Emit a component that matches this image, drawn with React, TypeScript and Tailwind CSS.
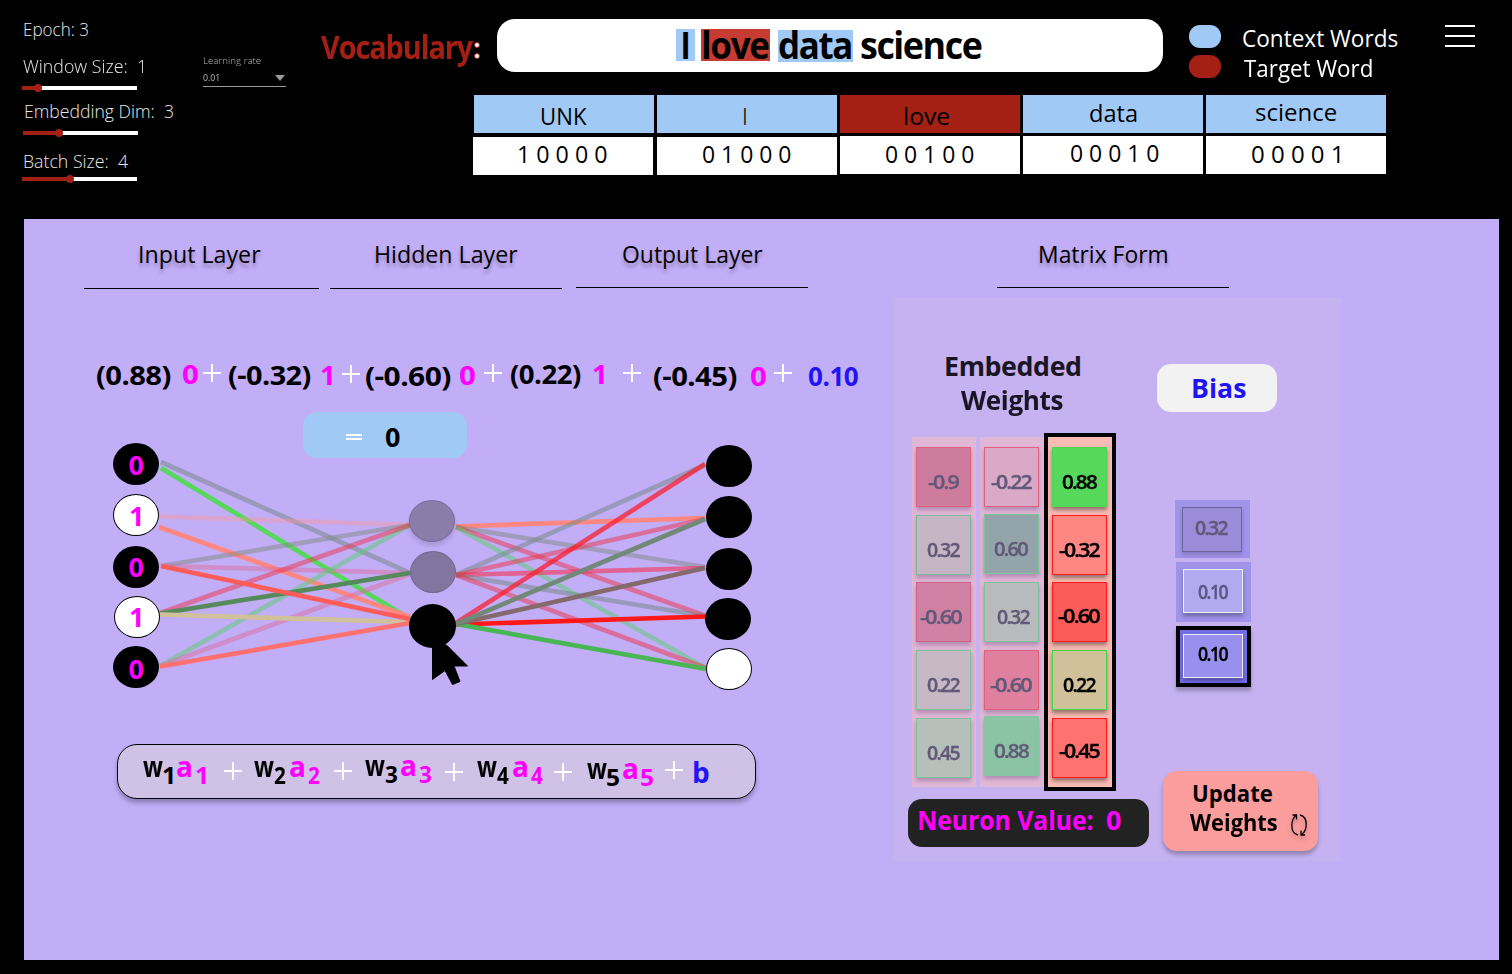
import React, { useLayoutEffect, useRef } from "react";

/* A text slot: the label is condensed or widened so that its ink fills the slot's width. */
function T({ children, className = "" }: { children: string; className?: string }) {
  const outer = useRef<HTMLSpanElement>(null);
  const inner = useRef<HTMLSpanElement>(null);
  useLayoutEffect(() => {
    const fit = () => {
      const o = outer.current;
      const i = inner.current;
      const ctx = document.createElement("canvas").getContext("2d");
      if (!o || !i || !ctx) return;
      const cs = getComputedStyle(i);
      ctx.font = `${cs.fontWeight} ${cs.fontSize} ${cs.fontFamily}`;
      const m = ctx.measureText(children);
      const tracking = (parseFloat(cs.letterSpacing) || 0) * (children.length - 1);
      const ink = m.actualBoundingBoxRight + m.actualBoundingBoxLeft + tracking;
      if (ink <= 0) return;
      const s = o.offsetWidth / ink;
      i.style.transform = `translateX(${m.actualBoundingBoxLeft * s}px) scaleX(${s})`;
    };
    fit();
    document.fonts.ready.then(fit);
  }, [children]);
  return (
    <span ref={outer} className={`block shrink-0 whitespace-pre ${className}`}>
      <span ref={inner} className="inline-block origin-left align-top">
        {children}
      </span>
    </span>
  );
}

function Plus({ className = "" }: { className?: string }) {
  return (
    <svg className={`block h-[18px] w-[18px] shrink-0 ${className}`} viewBox="0 0 18 18" stroke="#fff" strokeWidth="2">
      <path d="M0 9H18M9 0V18" />
    </svg>
  );
}

function Slider({ fill, className = "" }: { fill: string; className?: string }) {
  return (
    <div className={`flex h-2 w-[115px] shrink-0 items-center ${className}`}>
      <div className={`h-1 bg-[#a41f14] ${fill}`} />
      <div className="z-10 -mx-1 h-2 w-2 shrink-0 rounded-full bg-[#a41f14]" />
      <div className="h-1 flex-1 bg-white" />
    </div>
  );
}

function Settings() {
  const t = "h-8 text-[17.5px] leading-[33px] font-light text-[#e8e8e8]";
  return (
    <>
      <div className="flex w-[203px] shrink-0 flex-col pt-[13px] pl-[22px]">
        <T className={`ml-[1.5px] w-[64px] ${t}`}>Epoch: 3</T>
        <T className={`mt-[5px] ml-px w-[120px] ${t}`}>Window Size:  1</T>
        <Slider className="mt-[2px]" fill="w-[16px]" />
        <T className={`mt-[3px] ml-[3px] w-[148px] ${t}`}>Embedding Dim:  3</T>
        <Slider className="mt-[2px] ml-px" fill="w-[36px]" />
        <T className={`mt-[8px] ml-[2px] w-[104px] ${t}`}>Batch Size:  4</T>
        <Slider className="-mt-[2px]" fill="w-[48px]" />
      </div>
      <div className="flex w-[83px] shrink-0 flex-col pt-[53px] text-[9.5px] leading-4 text-[#b8b8b8]">
        <T className="h-4 w-[58px] font-light">Learning rate</T>
        <div className="mt-px flex h-[17px] items-start justify-between border-b border-[#999]">
          <T className="h-4 w-[16px]">0.01</T>
          <svg className="mt-[5px] mr-px h-[6px] w-[10px]" viewBox="0 0 10 6" fill="#999">
            <path d="M0 0H10L5 6Z" />
          </svg>
        </div>
      </div>
    </>
  );
}

const vocab = [
  { word: "UNK", bits: "1 0 0 0 0", bg: "bg-[#a0c9f6]", w: "w-[45px] ml-[68px] mt-[5px]", b: "w-[88px] ml-[46px] mt-px", row: "mt-1 -ml-px", gap: "" },
  { word: "I", bits: "0 1 0 0 0", bg: "bg-[#a0c9f6]", w: "w-[2px] ml-[87px] mt-[5px]", b: "w-[88px] ml-[46px] mt-px", row: "mt-1", gap: "ml-[3px]" },
  { word: "love", bits: "0 0 1 0 0", bg: "bg-[#a41f14]", w: "w-[44px] ml-[65px] mt-[5px]", b: "w-[88px] ml-[46px] mt-[2px]", row: "mt-[3px]", gap: "ml-[3px]" },
  { word: "data", bits: "0 0 0 1 0", bg: "bg-[#a0c9f6]", w: "w-[47px] ml-[67px] mt-[2px]", b: "w-[88px] ml-[48px] mt-px", row: "mt-[3px]", gap: "ml-[3px]" },
  { word: "science", bits: "0 0 0 0 1", bg: "bg-[#a0c9f6]", w: "w-[80px] ml-[50px] mt-[1px]", b: "w-[88px] ml-[46px] mt-[2px]", row: "mt-[3px]", gap: "ml-[3px]" },
];

function Header() {
  const sent = "text-[37px] leading-8 h-8 font-bold tracking-[-1.5px] text-black";
  return (
    <header className="flex h-[219px] shrink-0">
      <Settings />
      <div className="flex flex-1 flex-col">
        <div className="flex h-[95px] shrink-0 items-start">
          <div className="mt-[27px] ml-[35px] flex w-[176px] shrink-0 text-[32px] leading-10 font-bold tracking-[-1.2px] text-[#a41f14]">
            <T className="h-10 w-[153px]">Vocabulary</T>
            <div className="mt-[15px] flex flex-col gap-[5px]">
              <div className="h-[6px] w-[6px] rounded-full border border-[#a41f14] bg-white" />
              <div className="h-[6px] w-[6px] rounded-full border border-[#a41f14] bg-white" />
            </div>
          </div>
          <div className="mt-[19px] flex h-[53px] w-[666px] shrink-0 items-start rounded-[18px] bg-white pt-[10px] pl-[179px]">
            <div className="h-8 w-[19px] bg-[#a0c9f6] pl-[7px]">
              <T className={`w-[5px] ${sent}`}>I</T>
            </div>
            <div className="ml-[6px] h-8 w-[69px] bg-[#c63c32] pl-[2px]">
              <T className={`w-[66px] ${sent}`}>love</T>
            </div>
            <div className="mt-px ml-2 h-8 w-[75px] bg-[#a0c9f6] pl-px">
              <T className={`-mt-px w-[72px] ${sent}`}>data</T>
            </div>
            <T className={`ml-2 w-[121px] ${sent}`}>science</T>
          </div>
          <div className="mt-[25px] ml-[26px] flex w-[32px] shrink-0 flex-col gap-[7px]">
            <div className="h-[23px] rounded-[11px] bg-[#a0c9f6]" />
            <div className="h-[23px] rounded-[11px] bg-[#a41f14]" />
          </div>
          <div className="mt-[23px] ml-[21px] flex w-[203px] shrink-0 flex-col text-[23.5px] leading-[30px] text-white">
            <T className="ml-px h-[30px] w-[155px]">Context Words</T>
            <T className="ml-[2px] h-[30px] w-[128px]">Target Word</T>
          </div>
          <div className="mt-[25px] flex w-[30px] flex-col gap-2">
            <div className="h-[2px] bg-white" />
            <div className="h-[2px] bg-white" />
            <div className="h-[2px] bg-white" />
          </div>
        </div>
        <div className="ml-[188px] flex text-[23.5px] leading-8 text-black">
          {vocab.map((v) => (
            <div key={v.word} className={`flex w-[180px] flex-col ${v.gap}`}>
              <div className={`flex h-[38px] w-[180px] items-start ${v.bg}`}>
                <T className={`h-8 ${v.w}`}>{v.word}</T>
              </div>
              <div className={`flex h-[38px] w-[180px] items-start bg-white ${v.row}`}>
                <T className={`h-8 ${v.b}`}>{v.bits}</T>
              </div>
            </div>
          ))}
        </div>
      </div>
    </header>
  );
}

const grey = "rgba(112,136,128,.5)";
const haze = "rgba(130,140,130,.5)";
const rose = "rgba(240,50,70,.5)";
const mint = "rgba(85,210,110,.5)";
const pink = "rgba(220,110,155,.5)";
const edges: [number, number, number, number, string][] = [
  [161, 462, 410, 573, grey],
  [161, 468, 410, 619, "#55d85c"],
  [159, 516.5, 410, 525, "rgba(255,150,150,.4)"],
  [159, 527, 410, 617, "#ff8781"],
  [161, 566, 410, 525, haze],
  [161, 566, 410, 573, pink],
  [160, 666, 410, 525, mint],
  [160, 613, 410, 525, rose],
  [160, 666, 410, 574, pink],
  [160, 613.5, 410, 573, "#568a5c"],
  [160, 614.5, 410, 622, "#d1c19b"],
  [161, 566, 410, 619, "#fd5c58"],
  [160, 666.5, 410, 623, "#ff716e"],
  [456, 526.5, 705, 518, "#ff8781"],
  [456, 527, 705, 567, haze],
  [456, 527, 706, 616, rose],
  [456, 527, 706, 668, mint],
  [456, 575, 705, 465, grey],
  [456, 575, 705, 519, rose],
  [456, 575, 705, 568, "rgba(255,25,50,.5)"],
  [456, 575, 705, 616, grey],
  [456, 575, 706, 668, rose],
  [456, 624.5, 706, 616.5, "#ff1818"],
  [456, 623, 705, 464, "rgba(255,25,40,.72)"],
  [456, 624, 706, 669, "#48b753"],
  [456, 624, 705, 568, "#856a6d"],
  [456, 624, 705, 519, "#728878"],
];

const nodes = [
  { x: 136, y: 464, c: "bg-black", t: "0", p: "pt-[6px]" },
  { x: 136, y: 515, c: "bg-white border border-black", t: "1", p: "pt-[5px] pr-px" },
  { x: 136, y: 567, c: "bg-black", t: "0", p: "pt-[5px]" },
  { x: 137, y: 617, c: "bg-white border border-black", t: "1", p: "pt-[4px] pr-[3px]" },
  { x: 136, y: 667, c: "bg-black", t: "0", p: "pt-[7px]" },
  { x: 432, y: 521, c: "bg-[#8b7caa] border border-[#79699a] shadow-[0_4px_4px_rgba(0,0,0,0.12)]" },
  { x: 433, y: 572, c: "bg-[#8374a0] border border-[#746592]" },
  { x: 729, y: 466, c: "bg-black" },
  { x: 729, y: 517, c: "bg-black" },
  { x: 729, y: 569, c: "bg-black" },
  { x: 728, y: 619, c: "bg-black" },
  { x: 729, y: 669, c: "bg-white border border-black" },
];

function Network() {
  return (
    <div className="relative flex h-[354px] w-[870px] shrink-0 items-start pt-[22px] pl-[279px]">
      <svg className="absolute inset-0" width="870" height="354" viewBox="24 390 870 354" strokeWidth="4.7">
        {edges.map((e, i) => (
          <line key={i} x1={e[0]} y1={e[1]} x2={e[2]} y2={e[3]} stroke={e[4]} />
        ))}
        <ellipse cx="432.5" cy="626" rx="23.5" ry="22" />
        <path
          d="M432.5 640V679.5L445 670.5L452.5 684.5L460 681.5L454 666H467.5L447 645.5Z"
          stroke="#000"
          strokeWidth="1"
          strokeLinejoin="round"
        />
      </svg>
      {nodes.map((n, i) => (
        <div
          key={i}
          className={`absolute flex h-[42px] w-[46px] items-start justify-center rounded-[50%] text-[27px] leading-8 font-bold text-[#ff00ff] ${n.c} ${n.p ?? ""}`}
          style={{ left: n.x - 47, top: n.y - 411 }}
        >
          {n.t && <T className={n.t === "0" ? "h-8 w-[15px]" : "h-8 w-[11px]"}>{n.t}</T>}
        </div>
      ))}
      <div className="flex h-[46px] w-[164px] items-start rounded-[14px] bg-[#a0c9f6] pl-[43px]">
        <div className="mt-[22px] flex w-[16px] flex-col gap-[2px]">
          <div className="h-[2px] bg-white" />
          <div className="h-[2px] bg-white" />
        </div>
        <T className="mt-[9px] ml-[23px] h-8 w-[15px] text-[27px] leading-8 font-bold text-black">0</T>
      </div>
    </div>
  );
}

const terms = [
  { n: "1", m: "ml-[25px] mt-[6px]", plus: "ml-[18px] mt-[17px]", d: "w-[10px]", g: "ml-[5px]" },
  { n: "2", m: "ml-[12px] mt-[6px]", plus: "ml-[14px] mt-[17px]", d: "w-[12px]", g: "ml-[4px]" },
  { n: "3", m: "ml-[13px] mt-[5px]", plus: "ml-[14px] mt-[18px]", d: "w-[12px]", g: "ml-[4px]" },
  { n: "4", m: "ml-[14px] mt-[6px]", plus: "ml-[11px] mt-[18px]", d: "w-[12px]", g: "ml-[4px]" },
  { n: "5", m: "ml-[15px] mt-[8px]", plus: "ml-[12px] mt-[16px]", d: "w-[12px]", g: "ml-[4px]" },
];

function Formula() {
  return (
    <div className="ml-[93px] flex h-[55px] w-[639px] shrink-0 items-start rounded-[20px] border border-black bg-[#cfc2e6] text-[28px] leading-8 font-bold text-black shadow-[0_4px_4px_rgba(0,0,0,0.25)]">
      {terms.map((t) => (
        <React.Fragment key={t.n}>
          <div className={`flex shrink-0 items-start ${t.m}`}>
            <T className="-mt-px h-8 w-[20px]">w</T>
            <T className={`mt-[9px] h-8 text-[22.5px] ${t.d}`}>{t.n}</T>
            <T className="-mt-px ml-[4px] h-8 w-[14px] text-[#ff00ff]">a</T>
            <T className={`mt-[9px] h-8 text-[22.5px] text-[#ff00ff] ${t.g} ${t.d}`}>{t.n}</T>
          </div>
          <Plus className={t.plus} />
        </React.Fragment>
      ))}
      <T className="mt-[11px] ml-[11px] h-8 w-[15px] text-[#1f14f5]">b</T>
    </div>
  );
}

function Equation() {
  const m = "text-[#ff00ff]";
  return (
    <div className="mt-[69px] flex h-8 shrink-0 items-start pl-[73px] text-[27.5px] leading-8 font-bold tracking-[-0.5px] text-black [&>span]:h-8">
      <T className="mt-px w-[74px]">(0.88)</T>
      <T className={`ml-[12px] w-[15px] ${m}`}>0</T>
      <Plus className="mt-[6px] ml-[5px]" />
      <T className="mt-px ml-[8px] w-[82px]">(-0.32)</T>
      <T className={`mt-px ml-[10px] w-[11px] ${m}`}>1</T>
      <Plus className="mt-[7px] ml-[10px]" />
      <T className="mt-[2px] ml-[6px] w-[85px]">(-0.60)</T>
      <T className={`mt-px ml-[9px] w-[15px] ${m}`}>0</T>
      <Plus className="mt-[6px] ml-[9px]" />
      <T className="ml-[9px] w-[70px]">(0.22)</T>
      <T className={`ml-[12px] w-[11px] ${m}`}>1</T>
      <Plus className="mt-[6px] ml-[19px]" />
      <T className="mt-[2px] ml-[13px] w-[83px]">(-0.45)</T>
      <T className={`mt-[2px] ml-[14px] w-[15px] ${m}`}>0</T>
      <Plus className="mt-[6px] ml-[8px]" />
      <T className="mt-[2px] ml-[17px] w-[49px] text-[#1f14f5]">0.10</T>
    </div>
  );
}

function Heading({ box, slot, children }: { box: string; slot: string; children: string }) {
  return (
    <div className={`flex shrink-0 items-start border-b border-black pt-[19px] ${box}`}>
      <T className={`h-8 text-[23.5px] leading-8 text-black [text-shadow:0_4px_4px_rgba(0,0,0,0.25)] ${slot}`}>{children}</T>
    </div>
  );
}

const dim = "text-[#625978] shadow-[0_3px_4px_rgba(70,40,100,0.3)]";
const lit = "text-black shadow-[0_3px_4px_rgba(0,0,0,0.4)]";
const columns = [
  {
    box: "mt-1 h-[350px] w-[64px] bg-[#e1b7d6]",
    tone: dim,
    cells: [
      { t: "-0.9", c: "bg-[#ce7c9d] border-[#e2607f]", s: "ml-[11px] mt-[21px] w-[31px]" },
      { t: "0.32", c: "mt-[8px] bg-[#c6b5c5] border-[#7dba98]", s: "ml-[10px] mt-[21px] w-[33px]" },
      { t: "-0.60", c: "mt-[7px] bg-[#d081a3] border-[#cf6288]", s: "ml-[3px] mt-[21px] w-[42px]" },
      { t: "0.22", c: "mt-[8px] bg-[#c6b8c4] border-[#7dc49b]", s: "ml-[10px] mt-[21px] w-[33px]" },
      { t: "0.45", c: "mt-[8px] bg-[#b6bfba] border-[#7dc49b]", s: "ml-[10px] mt-[21px] w-[33px]" },
    ],
  },
  {
    box: "mt-1 ml-1 h-[350px] w-[64px] bg-[#e1b7d6]",
    tone: dim,
    cells: [
      { t: "-0.22", c: "bg-[#dba9c8] border-[#e2607f]", s: "ml-[6px] mt-[21px] w-[41px]" },
      { t: "0.60", c: "mt-[7px] bg-[#93a5ab] border-[#7dc49b]", s: "ml-[9px] mt-[21px] w-[34px]" },
      { t: "0.32", c: "mt-[8px] bg-[#b9babd] border-[#7dc49b]", s: "ml-[12px] mt-[21px] w-[33px]" },
      { t: "-0.60", c: "mt-[8px] bg-[#df809f] border-[#e2607f]", s: "ml-[5px] mt-[21px] w-[42px]" },
      { t: "0.88", c: "mt-[6px] bg-[#8bc3a5] border-[#86c6a4]", s: "ml-[9px] mt-[21px] w-[35px]" },
    ],
  },
  {
    box: "h-[358px] w-[72px] border-4 border-black bg-[#f9bbb3]",
    tone: lit,
    cells: [
      { t: "0.88", c: "bg-[#55d85c] border-[#4ad852]", s: "ml-[9px] mt-[21px] w-[35px]" },
      { t: "-0.32", c: "mt-[8px] bg-[#fe8683] border-[#ff1b1b]", s: "ml-[6px] mt-[21px] w-[41px]" },
      { t: "-0.60", c: "mt-[7px] bg-[#fc5c59] border-[#ff1b1b]", s: "ml-[5px] mt-[20px] w-[42px]" },
      { t: "0.22", c: "mt-[8px] bg-[#d1c19b] border-[#3ddc46]", s: "ml-[10px] mt-[21px] w-[33px]" },
      { t: "-0.45", c: "mt-[8px] bg-[#fe7270] border-[#ff1b1b]", s: "ml-[6px] mt-[19px] w-[41px]" },
    ],
  },
];

function Matrix() {
  const val = "h-6 text-[20.5px] leading-6 font-semibold tracking-[-1.8px] [-webkit-text-stroke:0.35px_currentColor]";
  const title = "h-8 text-[27px] leading-8 font-bold tracking-[-0.4px] text-[#1a1524]";
  return (
    <div className="mt-[9px] flex h-[564px] w-[448px] shrink-0 items-start bg-[#c6b2f1]">
      <div className="flex w-[255px] shrink-0 flex-col pt-[53px]">
        <T className={`ml-[52px] w-[134px] ${title}`}>Embedded</T>
        <T className={`mt-[2px] ml-[67px] w-[102px] ${title}`}>Weights</T>
        <div className="mt-[17px] flex items-start pl-[18px]">
          {columns.map((col, i) => (
            <div key={i} className={`flex shrink-0 flex-col px-1 pt-[10px] ${col.box}`}>
              {col.cells.map((cell, j) => (
                <div key={j} className={`flex h-[60px] w-[55px] shrink-0 items-start border ${col.tone} ${cell.c}`}>
                  <T className={`${val} ${cell.s}`}>{cell.t}</T>
                </div>
              ))}
            </div>
          ))}
        </div>
        <div className="mt-2 ml-[14px] flex h-[48px] w-[241px] items-start rounded-[14px] bg-[#222] pt-[5px] pl-[11px] text-[27px] leading-8 font-bold text-[#ff00ff]">
          <T className="h-8 w-[174px]">Neuron Value:</T>
          <T className="ml-[13px] h-8 w-[15px]">0</T>
        </div>
      </div>
      <div className="flex flex-1 flex-col items-start pt-[67px]">
        <div className="ml-2 flex h-[48px] w-[120px] rounded-[14px] bg-[#f2f2f2] pt-2 pl-[36px]">
          <T className="h-8 w-[53px] text-[27px] leading-8 font-bold text-[#1f14f5]">Bias</T>
        </div>
        <div className="mt-[88px] ml-[26px] h-[58px] w-[75px] bg-[#9f93ea] pt-[7px] pl-[7px]">
          <div className="flex h-[45px] w-[60px] items-start border border-[#6d6496] bg-[#9a8cd8] text-[#625978] shadow-[0_3px_4px_rgba(0,0,0,0.15)]">
            <T className={`mt-[7px] ml-[12px] w-[33px] ${val}`}>0.32</T>
          </div>
        </div>
        <div className="mt-1 ml-[27px] h-[60px] w-[75px] bg-[#9f93ea] pt-[7px] pl-[7px]">
          <div className="flex h-[44px] w-[60px] items-start border border-[#f0eef8] bg-[#b3a9ef] text-[#5d5582] shadow-[0_3px_4px_rgba(0,0,0,0.3)]">
            <T className={`mt-[9px] ml-[14px] w-[30px] ${val}`}>0.10</T>
          </div>
        </div>
        <div className="mt-1 ml-[27px] h-[61px] w-[75px] border-4 border-black bg-[#736ee8] pt-1 pl-[3px] shadow-[0_4px_4px_rgba(0,0,0,0.25)]">
          <div className="flex h-[44px] w-[60px] items-start border border-[#f0eef8] bg-[#9790ec] text-black shadow-[0_3px_4px_rgba(0,0,0,0.3)]">
            <T className={`mt-[6px] ml-[14px] w-[30px] ${val}`}>0.10</T>
          </div>
        </div>
        <div className="mt-[84px] ml-[14px] flex h-[80px] w-[155px] items-start rounded-[14px] bg-[#fc9d9d] pt-[6px] text-[23.5px] font-bold text-black shadow-[0_4px_4px_rgba(0,0,0,0.25)]">
          <div className="flex w-[128px] shrink-0 flex-col leading-8">
            <T className="ml-[31px] h-8 w-[78px]">Update</T>
            <T className="-mt-[3px] ml-[27px] h-8 w-[87px]">Weights</T>
          </div>
          <svg className="mt-[37px] h-[22px] w-[16px] drop-shadow-[0_3px_2px_rgba(0,0,0,0.25)]" viewBox="0 0 16 22" fill="none" stroke="#000" strokeWidth="1.3">
            <path d="M7 21C2.5 20 0.8 15.5 0.8 11.5C0.8 7 2.5 3.5 5 1.2M1.5 1H5.5V5.5" />
            <path d="M9 1C13.5 2 15.2 6.5 15.2 10.5C15.2 15 13.5 18.5 10.5 20.8M14 21H10V16.5" />
          </svg>
        </div>
      </div>
    </div>
  );
}

export default function App() {
  return (
    <div className="flex h-[974px] w-[1512px] flex-col overflow-hidden bg-black font-['Open_Sans','Noto_Sans',sans-serif]">
      <Header />
      <main className="ml-6 flex h-[741px] w-[1475px] shrink-0 bg-[#c2adf7]">
        <section className="flex w-[870px] shrink-0 flex-col">
          <div className="flex h-[70px] shrink-0 items-start">
            <Heading box="ml-[60px] h-[70px] w-[235px]" slot="ml-[56px] w-[121px]">Input Layer</Heading>
            <Heading box="ml-[11px] h-[70px] w-[232px]" slot="ml-[46px] w-[142px]">Hidden Layer</Heading>
            <Heading box="ml-[14px] h-[69px] w-[232px]" slot="ml-[47px] w-[140px]">Output Layer</Heading>
          </div>
          <Equation />
          <Network />
          <Formula />
        </section>
        <section className="flex flex-1 flex-col items-start">
          <Heading box="ml-[103px] h-[69px] w-[232px]" slot="ml-[43px] w-[127px]">Matrix Form</Heading>
          <Matrix />
        </section>
      </main>
    </div>
  );
}
